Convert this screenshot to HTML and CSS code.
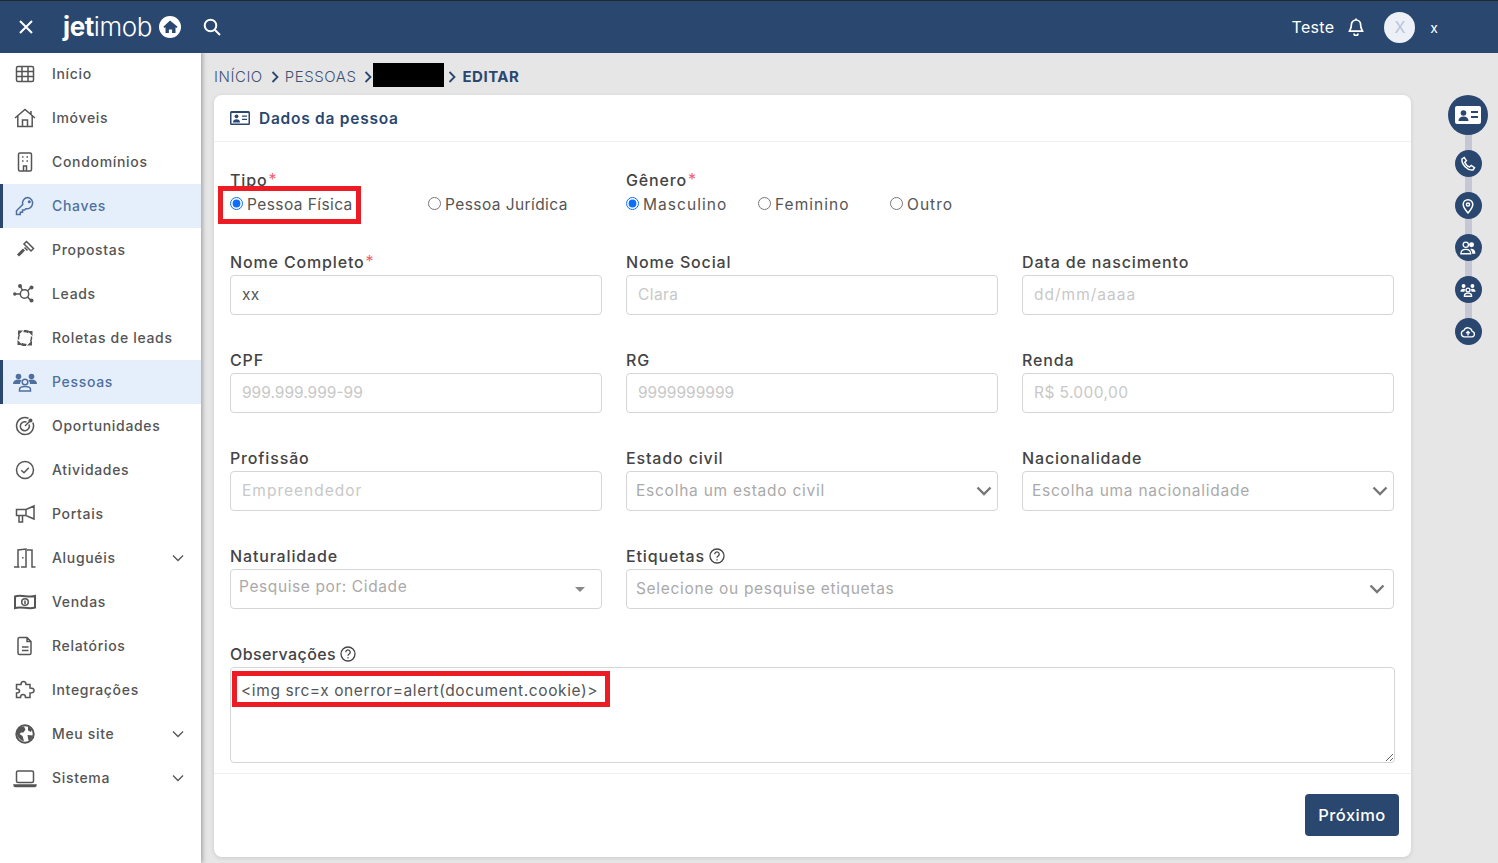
FILE: index.html
```html
<!DOCTYPE html>
<html lang="pt-BR">
<head>
  <meta charset="UTF-8">
  <meta name="viewport" content="width=device-width, initial-scale=1.0">
  <title>Jetimob - Editar pessoa</title>
  <link rel="stylesheet" href="styles.css">
</head>
<body>
  <header class="topbar">
    <svg class="close-icon" viewBox="0 0 14 14"><path d="M1 1l12 12M13 1L1 13"/></svg>
    <div class="logo"><b>jet</b>imob</div>
    <svg class="logo-house" viewBox="0 0 22 22"><circle cx="11" cy="11" r="11" fill="#fff"/><path d="M11 4.600L4.400 10.800l1.200 1.200.9-.8V17h3.400v-3.600h3.200V17h3.400v-5.800l.9.8 1.200-1.200z" fill="#2a4770"/></svg>
    <svg class="search-icon" viewBox="0 0 18 18"><circle cx="7.500" cy="7.500" r="5.800"/><path d="M12 12l5 5"/></svg>
    <div class="topbar-right">
      <span class="company">Teste</span>
      <svg class="bell-icon" viewBox="0 0 16 18"><path d="M8 2a4.600 4.600 0 0 0-4.600 4.600c0 4.400-1.700 5.600-2 6.600h13.200c-.3-1-2-2.200-2-6.600A4.600 4.600 0 0 0 8 2z"/><path d="M8 .6V2M6 15.600a2 2 0 0 0 4 0"/></svg>
      <div class="avatar">X</div>
      <span class="user">x</span>
    </div>
  </header>

  <div class="layout">
    <nav class="sidebar">
      <a class="menu-item"><svg viewBox="0 0 20 20"><rect x="1.500" y="2.500" width="17" height="15" rx="1.500"/><path d="M1.500 7.500h17M1.500 12.500h17M7 2.500v15M13 2.500v15"/></svg>Início</a>
      <a class="menu-item"><svg viewBox="0 0 22 20"><path d="M1 10L11 1.500 21 10M3.800 8v10.500h14.400V8M8.500 18.500v-6.500h5v6.500M17 3v4"/></svg>Imóveis</a>
      <a class="menu-item"><svg viewBox="0 0 20 20"><rect x="3.500" y="1" width="13" height="18" rx="1.500"/><path d="M7 5h1.500M11.500 5H13M7 9h1.500M11.500 9H13M8.500 19v-5h3v5"/></svg>Condomínios</a>
      <a class="menu-item active"><svg viewBox="0 0 20 20"><path d="M13 1.500a5.500 5.500 0 0 0-5.300 7L1.500 14.700V18.500h3.800v-2.300h2.200V14h2l1.300-1.300A5.500 5.500 0 1 0 13 1.500z"/><circle cx="14.300" cy="5.800" r=".8"/></svg>Chaves</a>
      <a class="menu-item"><svg viewBox="0 0 20 20"><path d="M11.500 1.500l7 7-2.500 2.500-7-7zM9.500 7.500L12.500 10.500"/><path class="thick" d="M9 9.500L3 15.500"/></svg>Propostas</a>
      <a class="menu-item"><svg viewBox="0 0 24 20"><circle cx="11.500" cy="10" r="4.200"/><path d="M9.500 6.500L7.500 2.500M14.500 7l3-3M14.500 13l3 3M7 10H2"/><circle class="dot" cx="7" cy="2" r="2"/><circle class="dot" cx="18.500" cy="3.500" r="2"/><circle class="dot" cx="18.500" cy="16.500" r="2"/><circle class="dot" cx="1.800" cy="10" r="1.700"/></svg>Leads</a>
      <a class="menu-item"><svg class="wheel" viewBox="0 0 20 20"><g><path class="fill" d="M3 2.500h5l-5 5z"/><path d="M3.500 11.500c-.3-2 .2-3.500 1-5M9 2.800c1.500-.3 3-.2 4.500.5"/></g><g transform="rotate(90 10 10)"><path class="fill" d="M3 2.500h5l-5 5z"/><path d="M3.500 11.500c-.3-2 .2-3.500 1-5"/></g><g transform="rotate(180 10 10)"><path class="fill" d="M3 2.500h5l-5 5z"/><path d="M3.500 11.500c-.3-2 .2-3.500 1-5M9 2.800c1.500-.3 3-.2 4.500.5"/></g><g transform="rotate(270 10 10)"><path class="fill" d="M3 2.500h5l-5 5z"/><path d="M3.500 11.500c-.3-2 .2-3.500 1-5"/></g></svg>Roletas de leads</a>
      <a class="menu-item active"><svg viewBox="0 0 24 20"><g class="solid"><circle cx="5.500" cy="4.500" r="2.800"/><circle cx="18.500" cy="4.500" r="2.800"/><path d="M0 12c0-3 2-4.500 5.500-4.500 1.300 0 2.400.2 3.200.7A5 5 0 0 0 7 12zM24 12c0-3-2-4.500-5.500-4.500-1.300 0-2.400.2-3.200.7A5 5 0 0 1 17 12z"/></g><circle cx="12" cy="10" r="2.800"/><path d="M6.500 19v-1.500c0-2 2-3 5.500-3s5.500 1 5.500 3V19z"/></svg>Pessoas</a>
      <a class="menu-item"><svg viewBox="0 0 20 20"><path d="M13.500 2.200A8.500 8.500 0 1 0 17.800 6.500"/><path d="M11.500 6A4.500 4.500 0 1 0 14 8.500"/><path d="M10 10l5-5"/><circle class="dot" cx="15.500" cy="4.500" r="2"/></svg>Oportunidades</a>
      <a class="menu-item"><svg viewBox="0 0 20 20"><circle cx="10" cy="10" r="8.500"/><path d="M6.300 10.300l2.700 2.500 4.800-5"/></svg>Atividades</a>
      <a class="menu-item"><svg viewBox="0 0 22 20"><path d="M20 2v13L12 11.500H2.500v-6H12zM5 11.500V18h3.500v-6.500M12 5.500v6"/></svg>Portais</a>
      <a class="menu-item"><svg viewBox="0 0 24 20"><path d="M1 19h5.500M5 18.500V2l8-1v18h-5M14 2h5v17h3.500"/><path d="M9.800 9v1.500"/></svg>Aluguéis<svg class="chev" viewBox="0 0 12 8"><path d="M1 1.500l5 5 5-5"/></svg></a>
      <a class="menu-item"><svg viewBox="0 0 24 20"><path class="heavy" d="M2 4.500c6-2.200 14 1.500 20-.5v11.500c-6 2.200-14-1.500-20 .5z"/><circle cx="12" cy="10" r="3.300"/><path d="M12 8.500v3.500"/></svg>Vendas</a>
      <a class="menu-item"><svg viewBox="0 0 20 20"><path d="M4.500 1.500H12l4 4v11.500a1.500 1.500 0 0 1-1.500 1.500h-10A1.500 1.500 0 0 1 3 17V3a1.500 1.500 0 0 1 1.500-1.500zM7 11h6.500M7 14.500h6.500M12 1.500v4h4"/></svg>Relatórios</a>
      <a class="menu-item"><svg viewBox="0 0 22 20"><path d="M7 4.500C7 2.500 8 1.500 9.500 1.500S12 2.500 12 4.500H16V8C18 8 20 9 20 10.500S18 13 16 13V17.500H11.500C11.500 15.500 10.500 14.500 9 14.500S6.500 15.500 6.500 17.500H2.500V13C4 13 5.500 12.500 5.500 11S4 9 2.500 9V4.500Z"/></svg>Integrações</a>
      <a class="menu-item"><svg viewBox="0 0 20 20"><circle class="heavy" cx="10" cy="10" r="8.700"/><path class="fill" d="M4 3.500l5-1 1.500 3-2 3H6L4.500 10l3 2 1.500 5-2.500-.5L3 13 1.500 9zM13 2l4 3.500-1 2.500-3-1.500zM12.500 11l5.500.5-3 5.500-1.500-.5-.5-2.500z"/></svg>Meu site<svg class="chev" viewBox="0 0 12 8"><path d="M1 1.500l5 5 5-5"/></svg></a>
      <a class="menu-item"><svg viewBox="0 0 24 20"><rect x="3.500" y="3" width="17" height="11.500" rx="1.500"/><path d="M1 17h22c0 1-.8 1.500-1.500 1.500h-19C1.800 18.500 1 18 1 17z"/></svg>Sistema<svg class="chev" viewBox="0 0 12 8"><path d="M1 1.500l5 5 5-5"/></svg></a>
    </nav>

    <main class="content">
      <div class="breadcrumb">
        <span>INÍCIO</span>
        <svg class="crumb-sep" viewBox="0 0 8 12"><path d="M1.500 1l5 5-5 5"/></svg>
        <span>PESSOAS</span>
        <svg class="crumb-sep" viewBox="0 0 8 12"><path d="M1.500 1l5 5-5 5"/></svg>
        <span class="redacted"></span>
        <svg class="crumb-sep" viewBox="0 0 8 12"><path d="M1.500 1l5 5-5 5"/></svg>
        <strong>EDITAR</strong>
      </div>

      <section class="card">
        <div class="card-header">
          <svg viewBox="0 0 20 16"><rect width="20" height="14" y="1" rx="1.500" fill="#2a4770"/><rect x="1.500" y="3" width="17" height="10.500" fill="#fff"/><circle cx="6.500" cy="6.300" r="1.900" fill="#2a4770"/><path d="M3 12.500c0-2.200 1.400-3.300 3.500-3.300s3.500 1.100 3.500 3.300zM12 5.500h5v1.300h-5zM12 8.700h5V10h-5z" fill="#2a4770"/></svg>
          <h2>Dados da pessoa</h2>
        </div>

        <form class="form-body">
          <div class="form-row radios-row">
            <div class="field">
              <label class="field-label">Tipo<i>*</i></label>
              <div class="radio-group two">
                <label class="radio"><input type="radio" name="tipo" checked>Pessoa Física</label>
                <label class="radio"><input type="radio" name="tipo">Pessoa Jurídica</label>
              </div>
            </div>
            <div class="field">
              <label class="field-label">Gênero<i>*</i></label>
              <div class="radio-group three">
                <label class="radio"><input type="radio" name="genero" checked>Masculino</label>
                <label class="radio"><input type="radio" name="genero">Feminino</label>
                <label class="radio"><input type="radio" name="genero">Outro</label>
              </div>
            </div>
          </div>

          <div class="form-row">
            <div class="field"><label class="field-label">Nome Completo<i>*</i></label><input class="control" type="text" value="xx"></div>
            <div class="field"><label class="field-label">Nome Social</label><input class="control" type="text" placeholder="Clara"></div>
            <div class="field"><label class="field-label">Data de nascimento</label><input class="control wider" type="text" placeholder="dd/mm/aaaa"></div>
          </div>

          <div class="form-row">
            <div class="field"><label class="field-label">CPF</label><input class="control digits" type="text" placeholder="999.999.999-99"></div>
            <div class="field"><label class="field-label">RG</label><input class="control digits" type="text" placeholder="9999999999"></div>
            <div class="field"><label class="field-label">Renda</label><input class="control" type="text" placeholder="R$ 5.000,00"></div>
          </div>

          <div class="form-row">
            <div class="field"><label class="field-label">Profissão</label><input class="control wider" type="text" placeholder="Empreendedor"></div>
            <div class="field">
              <label class="field-label">Estado civil</label>
              <div class="select-box">Escolha um estado civil<svg class="select-chev" viewBox="0 0 16 10"><path d="M1.500 1.500L8 8l6.500-6.500"/></svg></div>
            </div>
            <div class="field">
              <label class="field-label">Nacionalidade</label>
              <div class="select-box">Escolha uma nacionalidade<svg class="select-chev" viewBox="0 0 16 10"><path d="M1.500 1.500L8 8l6.500-6.500"/></svg></div>
            </div>
          </div>

          <div class="form-row">
            <div class="field">
              <label class="field-label">Naturalidade</label>
              <div class="select-box city">Pesquise por: Cidade<span class="caret"></span></div>
            </div>
            <div class="field wide">
              <label class="field-label">Etiquetas <svg class="help" viewBox="0 0 16 16"><circle cx="8" cy="8" r="7"/><path d="M5.800 6.200a2.200 2.200 0 1 1 3.400 1.800c-.8.500-1.200 1-1.200 1.800M8 11.200v1.200"/></svg></label>
              <div class="select-box tags">Selecione ou pesquise etiquetas<svg class="select-chev" viewBox="0 0 16 10"><path d="M1.500 1.500L8 8l6.500-6.500"/></svg></div>
            </div>
          </div>

          <div class="field notes">
            <label class="field-label">Observações <svg class="help" viewBox="0 0 16 16"><circle cx="8" cy="8" r="7"/><path d="M5.800 6.200a2.200 2.200 0 1 1 3.400 1.800c-.8.500-1.200 1-1.200 1.800M8 11.200v1.200"/></svg></label>
            <textarea class="control textarea">&lt;img src=x onerror=alert(document.cookie)&gt;</textarea>
          </div>
        </form>

        <div class="card-footer">
          <button class="next-btn" type="button">Próximo</button>
        </div>
      </section>
    </main>

    <aside class="steps">
      <div class="step big"><svg viewBox="0 0 26 20"><rect y="1" width="26" height="18" rx="2" fill="#fff"/><circle cx="8.500" cy="8" r="2.800" fill="#2a4770"/><path d="M3.500 16c0-3 2-4.500 5-4.500s5 1.500 5 4.500zM16 6h7v2h-7zM16 11h7v2h-7z" fill="#2a4770"/></svg></div>
      <div class="step"><svg viewBox="0 0 16 16"><path d="M4.200 1.500L2 3c-.8 5 5.500 12 11 11l1.500-2.300-3.300-2.200-1.700 1.500C8 10.500 5.500 8 4.800 6.200l1.600-1.500z"/></svg></div>
      <div class="step"><svg viewBox="0 0 16 16"><path d="M8 15c-2-2.500-4.800-5.400-4.800-8.500a4.800 4.800 0 0 1 9.600 0C12.800 9.600 10 12.500 8 15z"/><circle cx="8" cy="6.500" r="1.600"/></svg></div>
      <div class="step"><svg viewBox="0 0 18 16"><circle cx="6.500" cy="4.300" r="3"/><path d="M1 14.500c0-3.500 2-5 5.500-5s5.500 1.500 5.500 5z"/><circle class="white" cx="13" cy="4.300" r="2.800"/><path class="white" d="M11.500 9c3.800-.5 5.800 1.500 5.800 5.500h-3.500c0-2-.8-4-2.300-5.500z"/></svg></div>
      <div class="step"><svg viewBox="0 0 18 16"><circle class="white" cx="4" cy="3.500" r="2.200"/><circle class="white" cx="14" cy="3.500" r="2.200"/><path class="white" d="M.5 10c0-2 1.300-3.300 3.500-3.300 1 0 1.500.2 2 .6-.6.600-1 1.600-1 2.700zM17.500 10c0-2-1.300-3.300-3.500-3.300-1 0-1.500.2-2 .6.600.600 1 1.600 1 2.700z"/><circle cx="9" cy="8" r="2.200"/><path d="M5 15v-1c0-1.500 1.500-2.500 4-2.500s4 1 4 2.500v1z"/></svg></div>
      <div class="step"><svg viewBox="0 0 18 16"><path d="M5 13.500a3.700 3.700 0 0 1-.6-7.300 4.900 4.900 0 0 1 9.300 1 3.200 3.200 0 0 1-.3 6.300z"/><path d="M9 12V7.500M7 9.300l2-2 2 2"/></svg></div>
    </aside>
  </div>

  <!-- marcacoes vermelhas do print -->
  <div class="mark mark-type"></div>
  <div class="mark mark-notes"></div>
</body>
</html>
```

FILE: styles.css
```css
/* Tela de edicao de pessoa */
* {
  box-sizing: border-box;
}

body {
  margin: 0;
  height: 863px;
  overflow: hidden;
  position: relative;
  background: #e6e6e6;
  font-family: 'Inter', 'Open Sans', sans-serif;
  color: #444;
}

.topbar {
  height: 53px;
  background: #2a4770;
  border-top: 1px solid #23272e;
  display: flex;
  align-items: center;
  color: #fff;
  position: relative;
  z-index: 3;
}

.close-icon {
  width: 14px;
  height: 14px;
  margin-left: 19px;
  fill: none;
  stroke: #fff;
  stroke-width: 2;
}

.logo {
  margin-left: 30px;
  font-size: 26px;
  font-weight: 300;
  letter-spacing: -0.4px;
  line-height: 30px;
}

.logo b {
  font-weight: 700;
}

.logo-house {
  width: 22px;
  height: 22px;
  margin-left: 7px;
}

.search-icon {
  width: 18px;
  height: 18px;
  margin-left: 22px;
  fill: none;
  stroke: #fff;
  stroke-width: 2;
}

.topbar-right {
  margin-left: auto;
  display: flex;
  align-items: center;
  padding-right: 60px;
}

.company {
  font-size: 16px;
  letter-spacing: 0.3px;
}

.bell-icon {
  width: 16px;
  height: 18px;
  margin-left: 14px;
  fill: none;
  stroke: #fff;
  stroke-width: 1.7;
}

.avatar {
  width: 31px;
  height: 31px;
  margin-left: 20px;
  border-radius: 50%;
  background: #edf1f7;
  color: #b5c5dc;
  font-size: 16px;
  display: flex;
  align-items: center;
  justify-content: center;
}

.user {
  margin-left: 15px;
  font-size: 14px;
}

.layout {
  display: flex;
  height: 810px;
}

.sidebar {
  width: 201px;
  flex-shrink: 0;
  background: #fff;
  box-shadow: 2px 0 4px rgba(0, 0, 0, 0.25);
  position: relative;
  z-index: 2;
  margin-top: -1px;
}

.menu-item {
  height: 44px;
  display: flex;
  align-items: center;
  padding-left: 13px;
  font-size: 14px;
  line-height: 16px;
  font-weight: 500;
  letter-spacing: 0.68px;
  color: #555;
}

.menu-item > svg:first-child {
  width: 24px;
  height: 20px;
  margin-right: 15px;
  flex-shrink: 0;
  fill: none;
  stroke: #555;
  stroke-width: 1.5;
}

.menu-item .dot,
.menu-item .fill {
  fill: #555;
  stroke: none;
}

.menu-item .thick {
  stroke-width: 3;
}

.menu-item .heavy {
  stroke-width: 2;
}

.menu-item.active {
  background: #e5effc;
  color: #4f6f9e;
  box-shadow: inset 3px 0 0 #2a4770;
}

.menu-item.active > svg:first-child {
  stroke: #4f6f9e;
}

.menu-item.active .solid {
  fill: #4f6f9e;
  stroke: none;
}

.chev {
  width: 12px;
  height: 8px;
  margin-left: auto;
  margin-right: 17px;
  fill: none;
  stroke: #555;
  stroke-width: 1.3;
}

.content {
  width: 1197px;
  margin-left: 13px;
  flex-shrink: 0;
}

.breadcrumb {
  height: 42px;
  display: flex;
  align-items: center;
  font-size: 15px;
  font-weight: 300;
  letter-spacing: 0.55px;
  color: #3f5274;
  padding-top: 5px;
}

.breadcrumb strong {
  color: #2a4770;
  font-weight: 700;
  letter-spacing: 0.5px;
}

.crumb-sep {
  width: 8px;
  height: 12px;
  margin: 0 6px 0 8px;
  fill: none;
  stroke: #2a4770;
  stroke-width: 1.8;
}

.redacted {
  width: 71px;
  height: 24px;
  background: #000;
  margin-left: -5px;
  margin-right: -4px;
  margin-top: -4px;
}

.card {
  height: 762px;
  background: #fff;
  border-radius: 8px;
  box-shadow: 0 1px 4px rgba(0, 0, 0, 0.12);
}

.card-header {
  height: 47px;
  display: flex;
  align-items: center;
  padding-left: 16px;
  border-bottom: 1px solid #f0f0f0;
}

.card-header svg {
  width: 20px;
  height: 16px;
  margin-right: 9px;
}

.card-header h2 {
  margin: 0;
  font-size: 15.5px;
  font-weight: 600;
  letter-spacing: 0.75px;
  color: #2a4770;
}

.form-body {
  height: 631px;
  padding: 27px 17px 0 16px;
}

.form-row {
  display: grid;
  grid-template-columns: repeat(3, 372px);
  column-gap: 24px;
  margin-bottom: 34px;
}

.radios-row {
  height: 48px;
}

.field.wide {
  grid-column: span 2;
}

.field-label {
  display: flex;
  align-items: center;
  height: 22px;
  margin-bottom: 2px;
  font-size: 16px;
  font-weight: 500;
  letter-spacing: 0.85px;
  color: #444;
}

.notes .field-label {
  letter-spacing: 0.4px;
}

.field-label i {
  color: #f0616d;
  font-style: normal;
  font-weight: 400;
  margin-left: 1px;
  margin-top: -3px;
}

.radios-row .field-label {
  margin-bottom: 0;
}

.radio-group {
  display: grid;
  height: 26px;
  align-items: center;
}

.radio-group.two {
  grid-template-columns: 198px 198px;
}

.radio-group.three {
  grid-template-columns: 132px 132px 132px;
}

.radio {
  display: flex;
  align-items: center;
  font-size: 15.5px;
  letter-spacing: 0.42px;
  color: #555;
}

.radio-group.three .radio {
  letter-spacing: 1.05px;
}

.radio input {
  width: 13px;
  height: 13px;
  margin: 0 4px 2px 0;
  accent-color: #0d6efd;
}

.control,
.select-box {
  display: block;
  width: 100%;
  height: 40px;
  border: 1px solid #d5d5d5;
  border-radius: 4px;
  background: #fff;
  font-family: inherit;
  font-size: 15.5px;
  letter-spacing: 0.4px;
  color: #555;
  padding: 0 11px 2px;
  outline: none;
}

.control.digits {
  letter-spacing: 0;
}

.control.wider {
  letter-spacing: 1px;
}

.control::placeholder {
  color: #c8c8c8;
}

.select-box {
  position: relative;
  display: flex;
  align-items: center;
  padding-left: 9px;
  letter-spacing: 0.75px;
  color: #aaa;
}

.select-box.city {
  padding-left: 8px;
  padding-bottom: 5px;
  letter-spacing: 0.6px;
}

.select-box.tags {
  letter-spacing: 0.68px;
}

.select-chev {
  position: absolute;
  right: 5px;
  top: 14px;
  width: 16px;
  height: 10px;
  fill: none;
  stroke: #777;
  stroke-width: 2.4;
}

.select-box.tags .select-chev {
  right: 8px;
}

.caret {
  position: absolute;
  right: 16px;
  top: 17px;
  border-left: 5px solid transparent;
  border-right: 5px solid transparent;
  border-top: 5px solid #888;
}

.help {
  width: 16px;
  height: 16px;
  margin-left: 4px;
  fill: none;
  stroke: #444;
  stroke-width: 1.3;
}

.textarea {
  width: 1165px;
  height: 96px;
  padding: 13px 10px;
  line-height: 20px;
  letter-spacing: 0.6px;
  resize: vertical;
}

.card-footer {
  height: 84px;
  border-top: 1px solid #eee;
  display: flex;
  justify-content: flex-end;
  padding: 20px 12px 0 0;
}

.next-btn {
  width: 94px;
  height: 42px;
  background: #2a4770;
  border: none;
  border-radius: 4px;
  color: #fff;
  font-family: inherit;
  font-size: 16.5px;
  font-weight: 500;
  letter-spacing: 0.45px;
}

.steps {
  width: 87px;
  padding-top: 42px;
  display: flex;
  flex-direction: column;
  align-items: center;
  gap: 15px;
  position: relative;
  padding-left: 30px;
  padding-right: 3px;
  flex-shrink: 0;
  z-index: 1;
}

/* barra que liga os passos */
.steps::before {
  content: '';
  position: absolute;
  left: 54px;
  top: 70px;
  width: 7px;
  height: 210px;
  background: #c6c6d4;
}

.step {
  width: 27px;
  height: 27px;
  border-radius: 50%;
  background: #2a4770;
  display: flex;
  align-items: center;
  justify-content: center;
  position: relative;
}

.step svg {
  width: 16px;
  height: 16px;
  fill: none;
  stroke: #fff;
  stroke-width: 1.5;
}

.step .white {
  fill: #fff;
  stroke: none;
}

.step.big {
  width: 40px;
  height: 40px;
}

.step.big svg {
  width: 26px;
  height: 20px;
  stroke: none;
}

.mark {
  position: absolute;
  border: 5px solid #ed1c24;
  z-index: 4;
}

.mark-type {
  left: 218px;
  top: 186px;
  width: 143px;
  height: 38px;
}

.mark-notes {
  left: 232px;
  top: 671px;
  width: 378px;
  height: 36px;
}
```
